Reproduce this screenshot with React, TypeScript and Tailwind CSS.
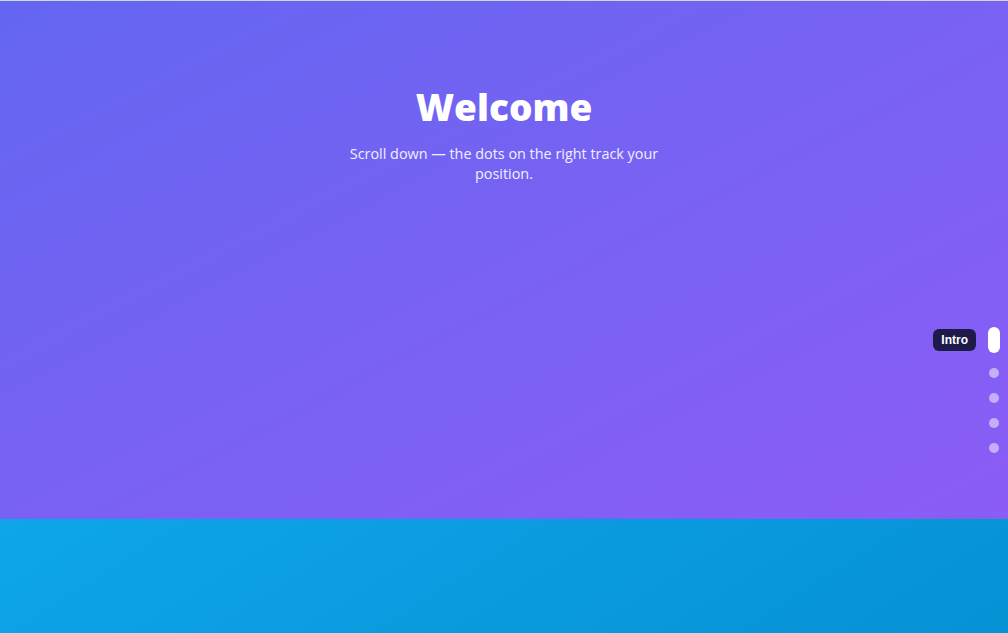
const sections = ['Intro', 'Features', 'Pricing', 'About', 'Contact'];

export default function App() {
  const active = 0;

  return (
    <div className="relative border-t border-gray-300" style={{ fontFamily: '"Open Sans", "Noto Sans", sans-serif' }}>
      {/* Intro */}
      <section className="h-[518px] bg-gradient-to-br from-[#6366f1] to-[#8b5cf6] pt-[86px] flex flex-col items-center text-center text-white">
        <h1 className="text-[37px] leading-10 font-extrabold">Welcome</h1>
        <p className="mt-[17px] max-w-xs text-[14.4px] leading-5 text-white/90">
          Scroll down — the dots on the right track your position.
        </p>
      </section>

      {/* Features */}
      <section className="h-[633px] bg-gradient-to-br from-[#0ea5e9] to-[#0284c7]" />
      <section className="h-[633px] bg-gradient-to-br from-[#10b981] to-[#059669]" />
      <section className="h-[633px] bg-gradient-to-br from-[#f59e0b] to-[#d97706]" />
      <section className="h-[633px] bg-gradient-to-br from-[#f43f5e] to-[#e11d48]" />

      {/* Dot nav */}
      <nav className="absolute right-2 top-[326px] flex flex-col items-end gap-[15px]">
        {sections.map((name, i) =>
          i === active ? (
            <div key={name} className="flex items-center gap-3">
              <span
                className="rounded-md bg-[#1e1b4b] px-2 py-[3px] text-xs font-bold text-white"
                style={{ fontFamily: '"Liberation Sans", Arial, sans-serif' }}
              >
                {name}
              </span>
              <span className="block h-[26px] w-3 rounded-full bg-white" />
            </div>
          ) : (
            <span key={name} className="mr-px block h-2.5 w-2.5 rounded-full bg-white/50" />
          )
        )}
      </nav>
    </div>
  );
}
